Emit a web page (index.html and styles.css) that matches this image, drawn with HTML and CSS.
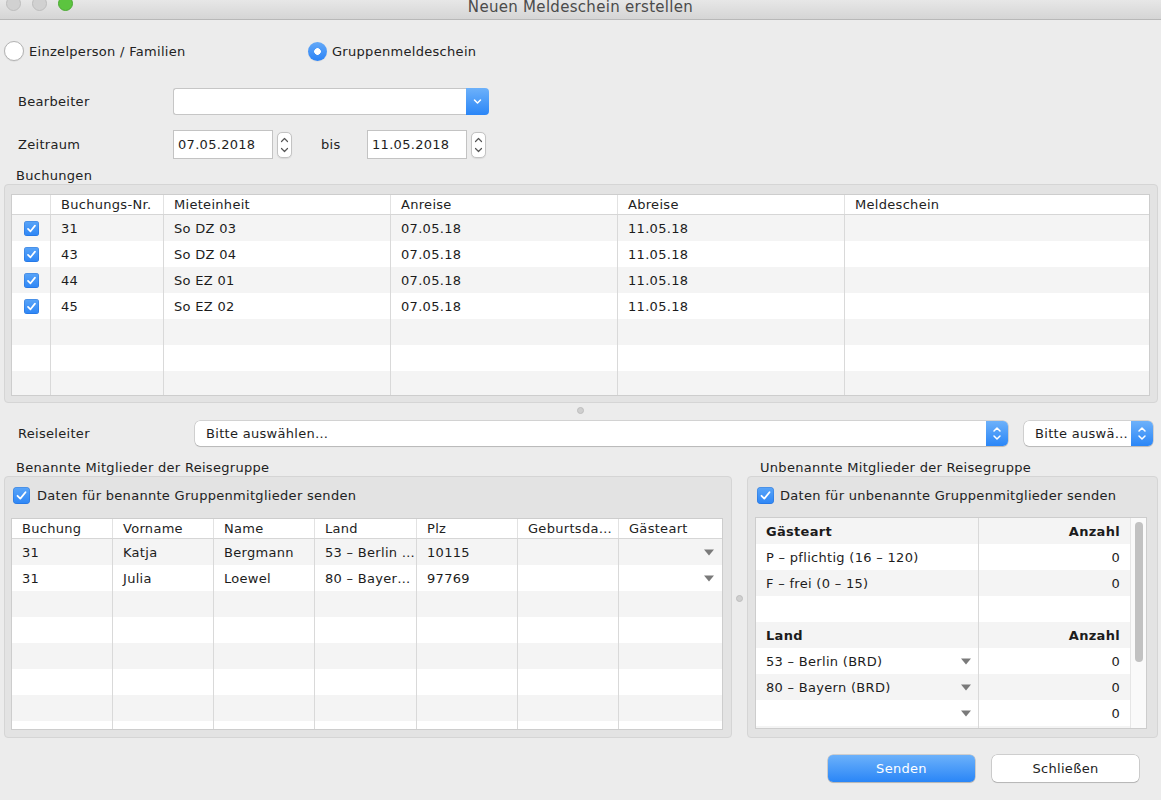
FILE: index.html
```html
<!DOCTYPE html>
<html lang="de">
<head>
<meta charset="utf-8">
<title>Neuen Meldeschein erstellen</title>
<link rel="stylesheet" href="styles.css">
</head>
<body>
<header class="titlebar">
  <div class="lights"><span class="light"></span><span class="light"></span><span class="light green"></span></div>
  <div class="title">Neuen Meldeschein erstellen</div>
  <div></div>
</header>

<div class="radios">
  <label class="radio first"><span class="radio-dot"></span>Einzelperson / Familien</label>
  <label class="radio"><span class="radio-dot on"></span>Gruppenmeldeschein</label>
</div>

<div class="field-row row-bearbeiter">
  <span class="label">Bearbeiter</span>
  <div class="combo">
    <div class="combo-input"></div>
    <div class="combo-btn"><svg width="23" height="27" viewBox="0 0 23 27"><path d="M8.5 12 L11.5 15 L14.5 12" fill="none" stroke="#fff" stroke-width="1.5" stroke-linecap="round" stroke-linejoin="round"/></svg></div>
  </div>
</div>

<div class="field-row row-zeitraum">
  <span class="label">Zeitraum</span>
  <div class="date">07.05.2018</div>
  <div class="stepper"><svg width="15" height="26" viewBox="0 0 15 26"><path d="M4.5 9.5 L7.5 6.5 L10.5 9.5" fill="none" stroke="#555" stroke-width="1.2" stroke-linecap="round" stroke-linejoin="round"/><path d="M4.5 16.5 L7.5 19.5 L10.5 16.5" fill="none" stroke="#555" stroke-width="1.2" stroke-linecap="round" stroke-linejoin="round"/></svg></div>
  <span class="bis">bis</span>
  <div class="date">11.05.2018</div>
  <div class="stepper"><svg width="15" height="26" viewBox="0 0 15 26"><path d="M4.5 9.5 L7.5 6.5 L10.5 9.5" fill="none" stroke="#555" stroke-width="1.2" stroke-linecap="round" stroke-linejoin="round"/><path d="M4.5 16.5 L7.5 19.5 L10.5 16.5" fill="none" stroke="#555" stroke-width="1.2" stroke-linecap="round" stroke-linejoin="round"/></svg></div>
</div>

<div class="section-label buchungen-label">Buchungen</div>

<div class="box box-bookings">
  <div class="table bookings">
    <div class="trow thead">
      <div class="cell"></div>
      <div class="cell">Buchungs-Nr.</div>
      <div class="cell">Mieteinheit</div>
      <div class="cell">Anreise</div>
      <div class="cell">Abreise</div>
      <div class="cell">Meldeschein</div>
    </div>
    <div class="tbody">
      <div class="trow"><div class="cell chk-cell"><span class="check small"><svg width="15" height="15" viewBox="0 0 15 15"><path d="M4 7.8 L6.5 10.3 L11 4.6" fill="none" stroke="#fff" stroke-width="1.7" stroke-linecap="round" stroke-linejoin="round"/></svg></span></div><div class="cell">31</div><div class="cell">So DZ 03</div><div class="cell">07.05.18</div><div class="cell">11.05.18</div><div class="cell"></div></div>
      <div class="trow"><div class="cell chk-cell"><span class="check small"><svg width="15" height="15" viewBox="0 0 15 15"><path d="M4 7.8 L6.5 10.3 L11 4.6" fill="none" stroke="#fff" stroke-width="1.7" stroke-linecap="round" stroke-linejoin="round"/></svg></span></div><div class="cell">43</div><div class="cell">So DZ 04</div><div class="cell">07.05.18</div><div class="cell">11.05.18</div><div class="cell"></div></div>
      <div class="trow"><div class="cell chk-cell"><span class="check small"><svg width="15" height="15" viewBox="0 0 15 15"><path d="M4 7.8 L6.5 10.3 L11 4.6" fill="none" stroke="#fff" stroke-width="1.7" stroke-linecap="round" stroke-linejoin="round"/></svg></span></div><div class="cell">44</div><div class="cell">So EZ 01</div><div class="cell">07.05.18</div><div class="cell">11.05.18</div><div class="cell"></div></div>
      <div class="trow"><div class="cell chk-cell"><span class="check small"><svg width="15" height="15" viewBox="0 0 15 15"><path d="M4 7.8 L6.5 10.3 L11 4.6" fill="none" stroke="#fff" stroke-width="1.7" stroke-linecap="round" stroke-linejoin="round"/></svg></span></div><div class="cell">45</div><div class="cell">So EZ 02</div><div class="cell">07.05.18</div><div class="cell">11.05.18</div><div class="cell"></div></div>
      <div class="trow"><div class="cell"></div><div class="cell"></div><div class="cell"></div><div class="cell"></div><div class="cell"></div><div class="cell"></div></div>
      <div class="trow"><div class="cell"></div><div class="cell"></div><div class="cell"></div><div class="cell"></div><div class="cell"></div><div class="cell"></div></div>
      <div class="trow"><div class="cell"></div><div class="cell"></div><div class="cell"></div><div class="cell"></div><div class="cell"></div><div class="cell"></div></div>
    </div>
  </div>
</div>

<div class="hsplit"><span class="split-dot"></span></div>

<div class="field-row row-reiseleiter">
  <span class="label">Reiseleiter</span>
  <div class="popup wide">
    <span class="popup-text">Bitte auswählen…</span>
    <span class="popup-btn"><svg width="22" height="25" viewBox="0 0 22 25"><path d="M8 10 L11 7 L14 10" fill="none" stroke="#fff" stroke-width="1.5" stroke-linecap="round" stroke-linejoin="round"/><path d="M8 15 L11 18 L14 15" fill="none" stroke="#fff" stroke-width="1.5" stroke-linecap="round" stroke-linejoin="round"/></svg></span>
  </div>
  <div class="popup narrow">
    <span class="popup-text">Bitte auswä…</span>
    <span class="popup-btn"><svg width="22" height="25" viewBox="0 0 22 25"><path d="M8 10 L11 7 L14 10" fill="none" stroke="#fff" stroke-width="1.5" stroke-linecap="round" stroke-linejoin="round"/><path d="M8 15 L11 18 L14 15" fill="none" stroke="#fff" stroke-width="1.5" stroke-linecap="round" stroke-linejoin="round"/></svg></span>
  </div>
</div>

<div class="groups">
  <div class="group-col left-col">
    <div class="section-label group-label">Benannte Mitglieder der Reisegruppe</div>
    <div class="box group-box">
      <label class="chk-row"><span class="check big"><svg width="17" height="17" viewBox="0 0 17 17"><path d="M4.5 8.8 L7.3 11.6 L12.5 5.2" fill="none" stroke="#fff" stroke-width="1.8" stroke-linecap="round" stroke-linejoin="round"/></svg></span>Daten für benannte Gruppenmitglieder senden</label>
      <div class="table members">
        <div class="trow thead">
          <div class="cell">Buchung</div>
          <div class="cell">Vorname</div>
          <div class="cell">Name</div>
          <div class="cell">Land</div>
          <div class="cell">Plz</div>
          <div class="cell">Geburtsda…</div>
          <div class="cell">Gästeart</div>
        </div>
        <div class="tbody">
          <div class="trow"><div class="cell">31</div><div class="cell">Katja</div><div class="cell">Bergmann</div><div class="cell">53 – Berlin …</div><div class="cell">10115</div><div class="cell"></div><div class="cell tri-cell"><svg class="tri" width="10" height="7" viewBox="0 0 10 7"><path d="M0 0.5 H10 L5 6.5 Z" fill="#7a7a7a"/></svg></div></div>
          <div class="trow"><div class="cell">31</div><div class="cell">Julia</div><div class="cell">Loewel</div><div class="cell">80 – Bayer…</div><div class="cell">97769</div><div class="cell"></div><div class="cell tri-cell"><svg class="tri" width="10" height="7" viewBox="0 0 10 7"><path d="M0 0.5 H10 L5 6.5 Z" fill="#7a7a7a"/></svg></div></div>
          <div class="trow"><div class="cell"></div><div class="cell"></div><div class="cell"></div><div class="cell"></div><div class="cell"></div><div class="cell"></div><div class="cell"></div></div>
          <div class="trow"><div class="cell"></div><div class="cell"></div><div class="cell"></div><div class="cell"></div><div class="cell"></div><div class="cell"></div><div class="cell"></div></div>
          <div class="trow"><div class="cell"></div><div class="cell"></div><div class="cell"></div><div class="cell"></div><div class="cell"></div><div class="cell"></div><div class="cell"></div></div>
          <div class="trow"><div class="cell"></div><div class="cell"></div><div class="cell"></div><div class="cell"></div><div class="cell"></div><div class="cell"></div><div class="cell"></div></div>
          <div class="trow"><div class="cell"></div><div class="cell"></div><div class="cell"></div><div class="cell"></div><div class="cell"></div><div class="cell"></div><div class="cell"></div></div>
          <div class="trow"><div class="cell"></div><div class="cell"></div><div class="cell"></div><div class="cell"></div><div class="cell"></div><div class="cell"></div><div class="cell"></div></div>
        </div>
      </div>
    </div>
  </div>

  <div class="vsplit"><span class="split-dot"></span></div>

  <div class="group-col right-col">
    <div class="section-label group-label">Unbenannte Mitglieder der Reisegruppe</div>
    <div class="box group-box">
      <label class="chk-row"><span class="check big"><svg width="17" height="17" viewBox="0 0 17 17"><path d="M4.5 8.8 L7.3 11.6 L12.5 5.2" fill="none" stroke="#fff" stroke-width="1.8" stroke-linecap="round" stroke-linejoin="round"/></svg></span>Daten für unbenannte Gruppenmitglieder senden</label>
      <div class="table counts">
        <div class="counts-rows">
          <div class="trow"><div class="cell bold">Gästeart</div><div class="cell num bold">Anzahl</div></div>
          <div class="trow"><div class="cell">P – pflichtig (16 – 120)</div><div class="cell num">0</div></div>
          <div class="trow"><div class="cell">F – frei (0 – 15)</div><div class="cell num">0</div></div>
          <div class="trow"><div class="cell"></div><div class="cell num"></div></div>
          <div class="trow"><div class="cell bold">Land</div><div class="cell num bold">Anzahl</div></div>
          <div class="trow"><div class="cell tri-cell"><span>53 – Berlin (BRD)</span><svg class="tri" width="10" height="7" viewBox="0 0 10 7"><path d="M0 0.5 H10 L5 6.5 Z" fill="#7a7a7a"/></svg></div><div class="cell num">0</div></div>
          <div class="trow"><div class="cell tri-cell"><span>80 – Bayern (BRD)</span><svg class="tri" width="10" height="7" viewBox="0 0 10 7"><path d="M0 0.5 H10 L5 6.5 Z" fill="#7a7a7a"/></svg></div><div class="cell num">0</div></div>
          <div class="trow"><div class="cell tri-cell"><span></span><svg class="tri" width="10" height="7" viewBox="0 0 10 7"><path d="M0 0.5 H10 L5 6.5 Z" fill="#7a7a7a"/></svg></div><div class="cell num">0</div></div>
          <div class="trow"><div class="cell"></div><div class="cell num"></div></div>
        </div>
        <div class="scrollbar"><span class="thumb"></span></div>
      </div>
    </div>
  </div>
</div>

<div class="buttons">
  <button class="btn primary">Senden</button>
  <button class="btn">Schließen</button>
</div>
</body>
</html>
```

FILE: styles.css
```css
* { box-sizing: border-box; }
html, body { margin: 0; padding: 0; }
body {
  width: 1161px;
  height: 800px;
  overflow: hidden;
  background: #ececec;
  font-family: "DejaVu Sans", "Noto Sans", sans-serif;
  font-size: 13px;
  letter-spacing: 0.3px;
  color: #1e1e1e;
}

/* title bar */
.titlebar {
  height: 20px;
  display: grid;
  grid-template-columns: 1fr auto 1fr;
  align-items: start;
  background: linear-gradient(#e7e7e7, #d5d5d5);
  border-bottom: 1px solid #b8b8b8;
}
.lights { display: flex; gap: 11px; padding-left: 6px; margin-top: -4px; }
.light { width: 15px; height: 15px; border-radius: 50%; background: #d1d1d1; border: 1px solid #bdbdbd; }
.light.green { background: #5cc43f; border-color: #4aa932; }
.title { font-size: 15px; letter-spacing: 0.3px; line-height: 17px; color: #4b4b4b; margin-top: -1px; }

/* radios */
.radios { display: flex; align-items: center; height: 20px; margin-top: 21px; }
.radio { display: flex; align-items: center; gap: 5px; color: #222; }
.radio.first { margin-left: 4px; width: 304px; }
.radio-dot {
  width: 20px; height: 20px; border-radius: 50%;
  background: #fff; border: 1px solid #b3b3b3;
  box-shadow: 0 0.5px 1px rgba(0,0,0,0.1);
}
.radio-dot.on {
  width: 19px; height: 19px;
  border: none;
  background: radial-gradient(circle, #fff 0, #fff 3px, transparent 3.6px), linear-gradient(#64a9f8, #2b83f6);
}

/* form rows */
.field-row { display: flex; align-items: center; padding-left: 18px; }
.field-row .label { width: 155px; color: #222; }
.row-bearbeiter { height: 27px; margin-top: 27px; }
.combo { display: flex; width: 316px; height: 27px; }
.combo-input {
  flex: 1; background: #fff;
  border: 1px solid #c6c6c6; border-right: none;
  border-radius: 3px 0 0 3px;
}
.combo-btn {
  width: 23px; height: 27px;
  background: linear-gradient(#6db1fa, #2a86f7);
  border-radius: 0 4px 4px 0;
  display: flex;
}

.row-zeitraum { height: 29px; margin-top: 15px; }
.date {
  width: 100px; height: 29px;
  background: #fff; border: 1px solid #c3c3c3;
  padding-left: 4px; line-height: 27px; color: #1e1e1e;
}
.stepper {
  width: 15px; height: 26px; margin-left: 4px;
  background: #fff; border: 1px solid #c3c3c3; border-radius: 5px;
  display: flex; align-items: center; justify-content: center;
  box-shadow: 0 0.5px 1px rgba(0,0,0,0.08);
}
.stepper svg { flex: none; }
.bis { margin-left: 29px; width: 46px; color: #222; }

.section-label { height: 16px; line-height: 16px; color: #222; }
.buchungen-label { margin-top: 9px; padding-left: 16px; }

/* boxes */
.box {
  background: #e3e3e3;
  border: 1px solid #d5d5d5;
  border-radius: 4px;
}
.box-bookings {
  margin-left: 4px; width: 1154px; height: 219px;
  padding: 9px 7px 6px 6px;
}

/* tables */
.table { background: #fff; border: 1px solid #cdcdcd; overflow: hidden; }
.trow { display: grid; height: 26px; }
.tbody .trow:nth-child(odd), .counts-rows .trow:nth-child(odd) { background: #f4f4f4; }
.thead { height: 20px; background: #fff; border-bottom: 1px solid #d6d6d6; }
.cell {
  border-left: 1px solid #d9d9d9;
  padding-left: 10px;
  display: flex; align-items: center;
  white-space: nowrap; overflow: hidden;
  color: #1c1c1c;
}
.cell:first-child { border-left: none; }
.thead .cell { border-left-color: #e2e2e2; color: #222; }

.bookings { height: 202px; }
.bookings .trow { grid-template-columns: 38px 113px 227px 227px 227px 1fr; }
.bookings .thead { height: 20px; }
.chk-cell { justify-content: center; padding-left: 0; }

.check {
  display: inline-flex; border-radius: 3px;
  background: linear-gradient(#5aa5f8, #2d86f6);
  box-shadow: inset 0 0 0 0.5px rgba(0,60,160,0.35);
}
.check.small { width: 15px; height: 15px; }
.check.big { width: 17px; height: 17px; border-radius: 4px; }

.hsplit { height: 17px; display: flex; justify-content: center; padding-top: 4px; }
.split-dot { width: 7px; height: 7px; border-radius: 50%; background: #cfcfcf; border: 1px solid #bdbdbd; display: block; }

.row-reiseleiter { height: 25px; margin-top: 1px; padding-right: 8px; }
.row-reiseleiter .label { width: 177px; }
.popup {
  display: flex; height: 25px;
  background: #fff; border-radius: 5px;
  box-shadow: 0 0 0 0.5px rgba(0,0,0,0.22), 0 1px 1px rgba(0,0,0,0.12);
  overflow: hidden;
}
.popup.wide { width: 813px; }
.popup.narrow { width: 129px; margin-left: 16px; }
.popup-text { flex: 1; padding-left: 11px; line-height: 25px; white-space: nowrap; overflow: hidden; color: #1e1e1e; }
.popup-btn { width: 22px; height: 25px; background: linear-gradient(#6db1fa, #2a86f7); display: flex; }

/* lower groups */
.groups { display: flex; margin-top: 13px; }
.group-col { display: flex; flex-direction: column; }
.left-col { margin-left: 4px; width: 728px; }
.right-col { width: 411px; }
.group-label { height: 17px; line-height: 17px; padding-left: 12px; }
.right-col .group-label { padding-left: 13px; }
.group-box { height: 262px; padding: 9px 8px 0 6px; }
.right-col .group-box { padding-left: 7px; }
.chk-row { display: flex; align-items: center; gap: 7px; height: 18px; margin-left: 2px; color: #222; }
.right-col .chk-row { gap: 6px; }

.vsplit { width: 15px; display: flex; justify-content: center; padding-top: 136px; }
.vsplit .split-dot { flex: none; }

.members { width: 712px; height: 212px; margin-top: 14px; }
.members .trow { grid-template-columns: 100px 101px 101px 102px 101px 101px 1fr; }
.tri-cell { justify-content: space-between; padding-right: 8px; }
.tri { flex: none; }
.members .tri-cell { justify-content: flex-end; }

.counts { width: 392px; height: 212px; margin-top: 13px; display: flex; }
.counts-rows { width: 374px; }
.counts .trow { grid-template-columns: 222px 1fr; }
.counts .tri-cell { padding-right: 7px; }
.counts .num { justify-content: flex-end; padding-right: 10px; }
.bold { font-weight: bold; }
.scrollbar { width: 16px; background: #fafafa; border-left: 1px solid #e6e6e6; padding: 4px 0 0 4px; }
.thumb { display: block; width: 8px; height: 140px; border-radius: 4px; background: #c2c2c2; }

/* buttons */
.buttons { display: flex; justify-content: flex-end; gap: 17px; padding-right: 22px; margin-top: 17px; }
.btn {
  width: 147px; height: 27px;
  font-family: "DejaVu Sans", "Noto Sans", sans-serif; font-size: 13px; letter-spacing: 0.3px;
  background: #fff; color: #222;
  border: none; border-radius: 5px;
  box-shadow: 0 0 0 0.5px rgba(0,0,0,0.25), 0 1px 1px rgba(0,0,0,0.12);
  padding: 0;
}
.btn.primary { background: linear-gradient(#6cb1fa, #2a86f7); color: #fff; }
```
